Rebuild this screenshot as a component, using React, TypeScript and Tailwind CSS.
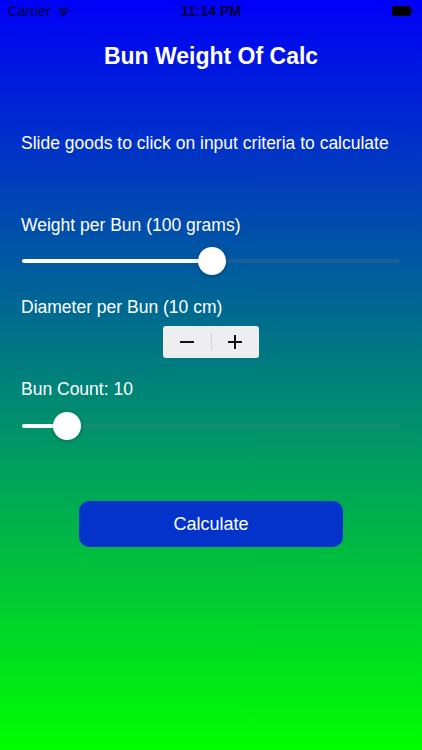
import React from "react";

function Slider({ pct }: { pct: number }) {
  return (
    <div className="relative h-[28px] mx-[22px]">
      <div className="absolute left-0 right-0 top-[12px] h-[4px] rounded-full bg-[rgba(120,120,128,0.2)]" />
      <div
        className="absolute left-0 top-[12px] h-[4px] rounded-full bg-white"
        style={{ width: `${pct}%` }}
      />
      <div
        className="absolute top-0 h-[28px] w-[28px] rounded-full bg-white shadow-[0_1px_4px_rgba(0,0,0,0.25)]"
        style={{ left: `calc(${pct}% - 14px)` }}
      />
    </div>
  );
}

export default function App() {
  return (
    <div
      className="w-[422px] h-[750px] overflow-hidden flex flex-col text-white bg-[linear-gradient(to_bottom,#0000f8,#00ff00)]"
      style={{ fontFamily: '"Liberation Sans", Arial, sans-serif' }}
    >
      {/* status bar */}
      <div className="relative h-[22px] flex items-center text-[14px] text-[#00003a]">
        <div className="flex items-center gap-[5px] pl-[8px]">
          <span>Carrier</span>
          <svg width="15" height="11" viewBox="0 0 15 11">
            <path d="M7.5 10.5 L5.2 8 A3.3 3.3 0 0 1 9.8 8 Z" fill="#00003a" />
            <path d="M3.6 6.3 A5.6 5.6 0 0 1 11.4 6.3 L10.3 7.4 A4.1 4.1 0 0 0 4.7 7.4 Z" fill="#00003a" />
            <path d="M1.5 4.2 A8.6 8.6 0 0 1 13.5 4.2 L12.4 5.3 A7.1 7.1 0 0 0 2.6 5.3 Z" fill="#00003a" />
          </svg>
        </div>
        <div className="absolute left-0 right-0 text-center font-bold">11:14 PM</div>
        <div className="ml-auto mr-[9px] flex items-center">
          <div className="w-[19px] h-[10px] rounded-[3px] bg-black" />
          <div className="w-[1.5px] h-[4px] bg-[#00003a] ml-[1px] rounded-r" />
        </div>
      </div>

      <div className="mt-[20px] text-center font-bold text-[23px] leading-[28px]">Bun Weight Of Calc</div>

      <div className="mt-[62px] pl-[21px] text-[17.5px] leading-[22px]">
        Slide goods to click on input criteria to calculate
      </div>

      <div className="mt-[60px] pl-[21px] text-[17.5px] leading-[22px]">Weight per Bun (100 grams)</div>
      <div className="mt-[11px]">
        <Slider pct={50.3} />
      </div>

      <div className="mt-[21px] pl-[21px] text-[17.5px] leading-[22px]">Diameter per Bun (10 cm)</div>
      <div className="mt-[8px] flex justify-center">
        <div className="flex items-center w-[96px] h-[32px] rounded-[3px] bg-[#eeeef0] text-black">
          <div className="flex-1 flex items-center justify-center">
            <div className="w-[14px] h-[2px] bg-[#111]" />
          </div>
          <div className="w-[1px] h-[18px] bg-[#d4d4d8]" />
          <div className="flex-1 flex items-center justify-center">
            <div className="relative w-[14px] h-[14px]">
              <div className="absolute left-0 top-[6px] w-[14px] h-[2px] bg-[#111]" />
              <div className="absolute left-[6px] top-0 w-[2px] h-[14px] bg-[#111]" />
            </div>
          </div>
        </div>
      </div>

      <div className="mt-[20px] pl-[21px] text-[17.5px] leading-[22px]">Bun Count: 10</div>
      <div className="mt-[12px]">
        <Slider pct={11.9} />
      </div>

      <div className="mt-[61px] flex justify-center">
        <button className="w-[264px] h-[46px] rounded-[10px] bg-[#0433cc] text-white text-[18px]">
          Calculate
        </button>
      </div>
    </div>
  );
}
